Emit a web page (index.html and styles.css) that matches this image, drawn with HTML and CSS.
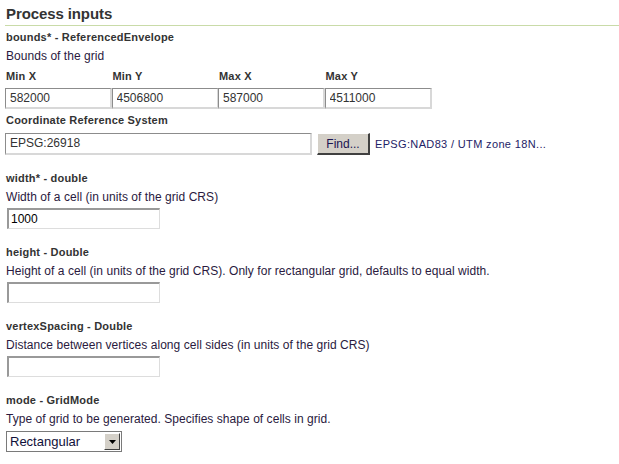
FILE: index.html
```html
<!DOCTYPE html>
<html>
<head>
<meta charset="utf-8">
<link rel="stylesheet" href="styles.css">
</head>
<body>
<div class="panel">
  <h2 class="title">Process inputs</h2>

  <div class="param first">
    <div class="pname">bounds* - ReferencedEnvelope</div>
    <div class="pdesc">Bounds of the grid</div>
    <div class="bbox">
      <div class="bcol"><div class="blabel">Min X</div><input class="tin bin" type="text" value="582000"></div>
      <div class="bcol"><div class="blabel">Min Y</div><input class="tin bin" type="text" value="4506800"></div>
      <div class="bcol"><div class="blabel">Max X</div><input class="tin bin" type="text" value="587000"></div>
      <div class="bcol"><div class="blabel">Max Y</div><input class="tin bin" type="text" value="4511000"></div>
    </div>
    <div class="blabel crslabel">Coordinate Reference System</div>
    <div class="crs">
      <input class="tin crsin" type="text" value="EPSG:26918">
      <button class="btn" type="button">Find...</button>
      <span class="crsname">EPSG:NAD83 / UTM zone 18N...</span>
    </div>
  </div>

  <div class="param">
    <div class="pname">width* - double</div>
    <div class="pdesc">Width of a cell (in units of the grid CRS)</div>
    <input class="tin sin dark" type="text" value="1000">
  </div>

  <div class="param">
    <div class="pname">height - Double</div>
    <div class="pdesc">Height of a cell (in units of the grid CRS). Only for rectangular grid, defaults to equal width.</div>
    <input class="tin sin" type="text" value="">
  </div>

  <div class="param">
    <div class="pname">vertexSpacing - Double</div>
    <div class="pdesc">Distance between vertices along cell sides (in units of the grid CRS)</div>
    <input class="tin sin" type="text" value="">
  </div>

  <div class="param">
    <div class="pname">mode - GridMode</div>
    <div class="pdesc">Type of grid to be generated. Specifies shape of cells in grid.</div>
    <div class="select">
      <span class="selval">Rectangular</span>
      <span class="selbtn"><svg width="7" height="4" viewBox="0 0 7 4"><path d="M0 0h7L3.5 4z" fill="#000"/></svg></span>
    </div>
  </div>
</div>
</body>
</html>
```

FILE: styles.css
```css
html, body {
  margin: 0;
  padding: 0;
  background: #fff;
}
body {
  font-family: "Liberation Sans", Arial, sans-serif;
  color: #2a1f3d;
}
.panel {
  padding: 0 0 0 5px;
}
.title {
  margin: 0;
  height: 26px;
  box-sizing: border-box;
  padding: 5px 0 0 1px;
  font-size: 15px;
  line-height: 18px;
  font-weight: bold;
  color: #333;
  letter-spacing: -0.1px;
  border-bottom: 1px solid #c9dba8;
}
.param {
  padding: 0 0 0 1px;
  margin-top: 14px;
}
.param.first {
  margin-top: 2px;
  margin-bottom: 3px;
}
.pname {
  font-size: 11px;
  font-weight: bold;
  line-height: 19px;
  color: #333;
  letter-spacing: 0.2px;
}
.pdesc {
  font-size: 12px;
  line-height: 19px;
  color: #2a1a40;
  letter-spacing: 0.05px;
}
.bbox {
  display: flex;
  margin-left: -1px;
}
.bcol {
  display: flex;
  flex-direction: column;
  width: 106.5px;
}
.blabel {
  font-size: 11px;
  font-weight: bold;
  line-height: 21px;
  color: #333;
  padding-left: 1px;
  letter-spacing: 0.2px;
}
.bcol .blabel {
  margin-bottom: 1px;
}
.crslabel {
  margin-top: 2px;
  line-height: 19px;
  padding-left: 0;
}
.tin {
  box-sizing: border-box;
  height: 21px;
  margin: 0;
  padding: 0 0 0 4px;
  font-family: "Liberation Sans", Arial, sans-serif;
  font-size: 12px;
  color: #333;
  background: #fff;
  border-style: solid;
  border-width: 1px 2px 2px 1px;
  border-color: #8c8c8c #d8d8d8 #d8d8d8 #8c8c8c;
  outline: none;
}
.bin {
  width: 107px;
}
.crs {
  display: flex;
  align-items: center;
  margin-top: 2px;
  margin-left: -1px;
}
.crsin {
  width: 307px;
  height: 22px;
}
.btn {
  box-sizing: border-box;
  height: 22px;
  width: 53px;
  margin: 1px 0 0 5px;
  padding: 0;
  font-family: "Liberation Sans", Arial, sans-serif;
  font-size: 12px;
  color: #1a1450;
  background: #d4d0c8;
  border-style: solid;
  border-width: 1px 2px 2px 1px;
  border-color: #fff #404040 #404040 #fff;
}
.crsname {
  margin-left: 5px;
  font-size: 11px;
  letter-spacing: 0.35px;
  color: #1e2266;
}
.sin {
  display: block;
  width: 153px;
  margin: 1px 0 0 1px;
  padding-left: 2px;
  border-width: 2px 1px 1px 2px;
  border-color: #999 #ddd #ddd #999;
}
.sin.dark {
  color: #000;
}
.select {
  display: flex;
  box-sizing: border-box;
  width: 116px;
  height: 21px;
  margin-top: 2px;
  border: 1px solid #7a7a7a;
  background: #fff;
}
.selval {
  flex: 1;
  font-size: 13px;
  line-height: 19px;
  padding-left: 3px;
  color: #10103a;
}
.selbtn {
  box-sizing: border-box;
  width: 16px;
  margin: 1px;
  display: flex;
  align-items: center;
  justify-content: center;
  background: #d4d0c8;
  border-style: solid;
  border-width: 1px;
  border-color: #fff #404040 #404040 #fff;
}
```
